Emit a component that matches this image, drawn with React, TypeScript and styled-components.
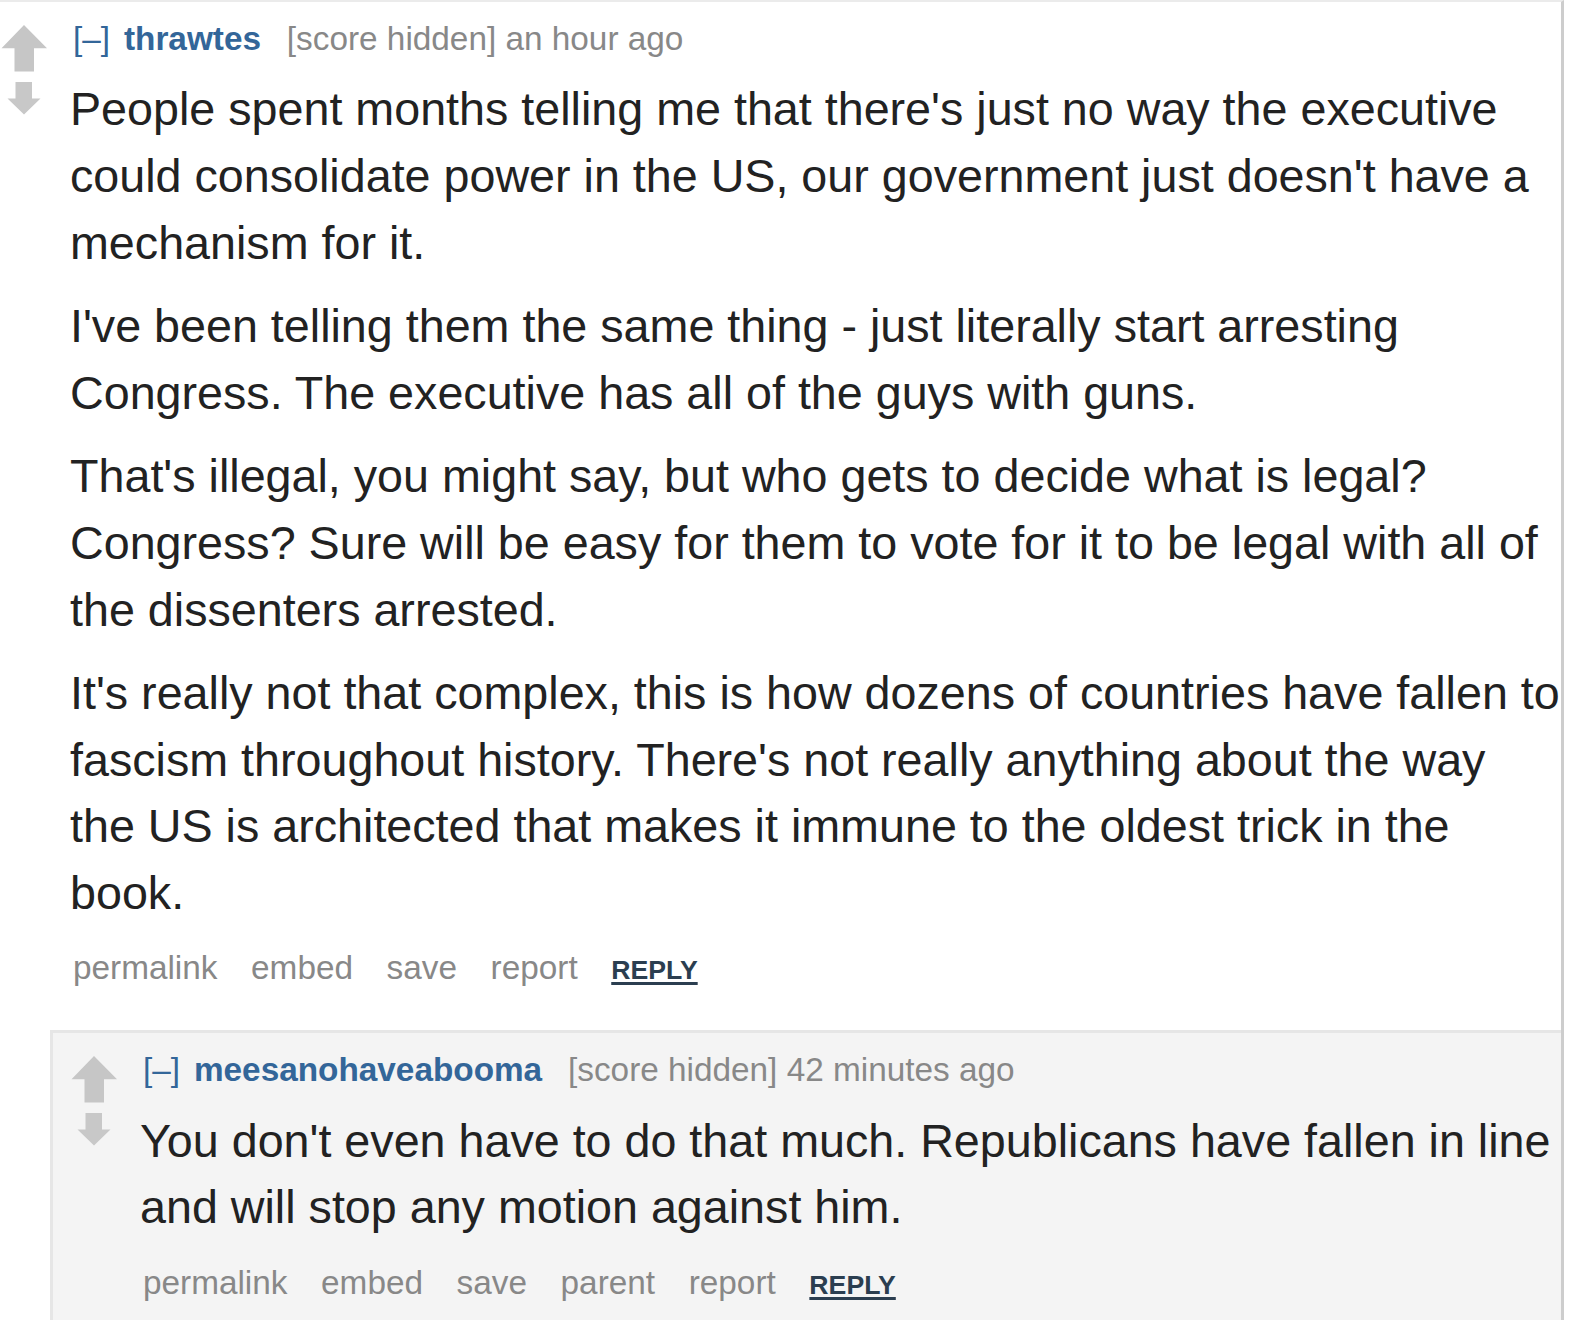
import React from 'react';
import styled, { createGlobalStyle } from 'styled-components';

const Global = createGlobalStyle`
  html, body {
    margin: 0;
    padding: 0;
    background: #ffffff;
  }
  body {
    font-family: "Liberation Sans", Arial, Helvetica, sans-serif;
    overflow: hidden;
  }
`;

const Page = styled.div`
  box-sizing: border-box;
  width: 1564px;
  height: 1320px;
  border-top: 2px solid #ebebeb;
  border-right: 3px solid #cdcdcd;
  display: flex;
  flex-direction: column;
  overflow: hidden;
`;

const Row = styled.div`
  display: flex;
  align-items: flex-start;
`;

const Midcol = styled.div`
  flex: none;
  width: 70px;
  display: flex;
  flex-direction: column;
  align-items: flex-start;
  padding-top: 22px;
`;

const ArrowSvg = styled.svg<{ $gap?: number }>`
  display: block;
  margin-top: ${(p) => p.$gap ?? 0}px;
  filter: blur(0.45px);
`;

const Entry = styled.div`
  flex: 1;
  min-width: 0;
`;

const Tagline = styled.div`
  padding: 17.2px 0 0 3px;
  font-size: 33.33px;
  line-height: 40px;
  color: #888888;
  white-space: nowrap;
`;

const Expand = styled.a`
  color: #336699;
  text-decoration: none;
  margin-right: 4.6px;
`;

const Author = styled.a`
  color: #336699;
  font-weight: bold;
  text-decoration: none;
  margin-right: 16.6px;
`;

const Body = styled.div`
  margin-top: 17.3px;
  font-size: 46.67px;
  line-height: 66.67px;
  color: #222222;
`;

const Para = styled.p`
  margin: 0 0 16.67px;
  &:last-child {
    margin-bottom: 0;
  }
`;

const Buttons = styled.ul`
  list-style: none;
  margin: 21.95px 0 0;
  padding: 0 0 0 3px;
  display: flex;
  align-items: baseline;
  gap: 33.6px;
  font-size: 33.33px;
  line-height: 40px;
  white-space: nowrap;
`;

const ButtonItem = styled.li`
  margin: 0;
  padding: 0;
`;

const ButtonLink = styled.a<{ $reply?: boolean }>`
  color: ${(p) => (p.$reply ? '#2b3e50' : '#888888')};
  font-size: ${(p) => (p.$reply ? '26.67px' : 'inherit')};
  font-weight: ${(p) => (p.$reply ? 'bold' : 'normal')};
  text-transform: ${(p) => (p.$reply ? 'uppercase' : 'none')};
  text-decoration: ${(p) => (p.$reply ? 'underline' : 'none')};
  text-decoration-thickness: 3px;
  text-underline-offset: 3px;
`;

const Child = styled.div`
  flex: 1;
  margin: 39.8px 0 0 50px;
  border-left: 3px solid #e6e6e6;
  border-top: 3px solid #e6e6e6;
  background: #f4f4f4;
  padding-left: 17px;
`;

const UpArrow = () => (
  <ArrowSvg width="48" height="48" viewBox="0 0 48 48">
    <path d="M24 1 L47 24.3 L34 24.3 L34 47.5 L14.5 47.5 L14.5 24.3 L1.5 24.3 Z" fill="#c6c6c6" />
  </ArrowSvg>
);

const DownArrow = () => (
  <ArrowSvg $gap={9.5} width="48" height="34" viewBox="0 0 48 34">
    <path d="M15.5 0 L32 0 L32 16.6 L40.5 16.6 L24 32.5 L7.5 16.6 L15.5 16.6 Z" fill="#c8c8c8" />
  </ArrowSvg>
);

type CommentData = {
  author: string;
  time: string;
  paragraphs: string[];
  buttons: string[];
};

const parent: CommentData = {
  author: 'thrawtes',
  time: 'an hour ago',
  paragraphs: [
    "People spent months telling me that there's just no way the executive could consolidate power in the US, our government just doesn't have a mechanism for it.",
    "I've been telling them the same thing - just literally start arresting Congress. The executive has all of the guys with guns.",
    "That's illegal, you might say, but who gets to decide what is legal? Congress? Sure will be easy for them to vote for it to be legal with all of the dissenters arrested.",
    "It's really not that complex, this is how dozens of countries have fallen to fascism throughout history. There's not really anything about the way the US is architected that makes it immune to the oldest trick in the book.",
  ],
  buttons: ['permalink', 'embed', 'save', 'report'],
};

const child: CommentData = {
  author: 'meesanohaveabooma',
  time: '42 minutes ago',
  paragraphs: [
    'You don\'t even have to do that much. Republicans have fallen in line and will stop any motion against him.',
  ],
  buttons: ['permalink', 'embed', 'save', 'parent', 'report'],
};

const CommentEntry = ({ data }: { data: CommentData }) => (
  <Row>
    <Midcol>
      <UpArrow />
      <DownArrow />
    </Midcol>
    <Entry>
      <Tagline>
        <Expand href="#">[–]</Expand> <Author href="#">{data.author}</Author> [score hidden] {data.time}
      </Tagline>
      <Body>
        {data.paragraphs.map((p, i) => (
          <Para key={i}>{p}</Para>
        ))}
      </Body>
      <Buttons>
        {data.buttons.map((b) => (
          <ButtonItem key={b}>
            <ButtonLink href="#">{b}</ButtonLink>
          </ButtonItem>
        ))}
        <ButtonItem>
          <ButtonLink href="#" $reply>
            reply
          </ButtonLink>
        </ButtonItem>
      </Buttons>
    </Entry>
  </Row>
);

export default function App() {
  return (
    <>
      <Global />
      <Page>
        <CommentEntry data={parent} />
        <Child>
          <CommentEntry data={child} />
        </Child>
      </Page>
    </>
  );
}
